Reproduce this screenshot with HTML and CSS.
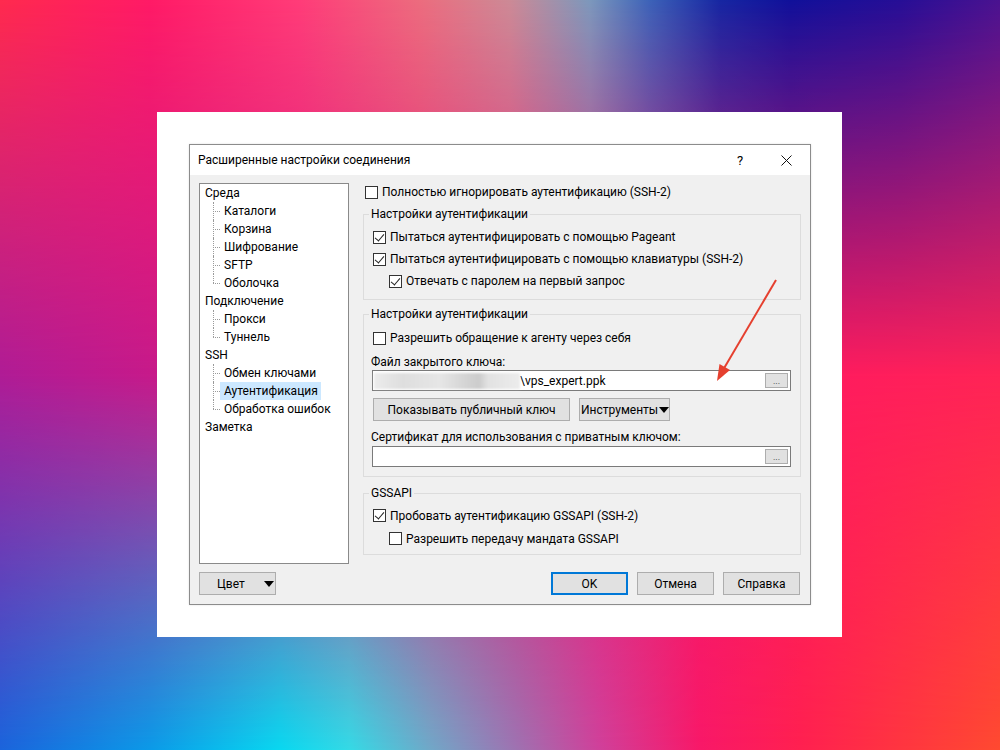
FILE: index.html
```html
<!DOCTYPE html>
<html lang="ru">
<head>
    <meta charset="utf-8">
    <title>Расширенные настройки соединения</title>
    <link rel="stylesheet" href="styles.css">
</head>
<body>
    <div class="card">
        <div class="dialog">
            <div class="titlebar">
                <span class="title">Расширенные настройки соединения</span>
                <span class="tb-btn">?</span>
                <span class="tb-btn">
                    <svg width="11" height="11" viewBox="0 0 11 11"><path d="M0.5 0.5L10.5 10.5M10.5 0.5L0.5 10.5" stroke="#111" stroke-width="1"/></svg>
                </span>
            </div>

            <div class="content">
                <div class="main">
                    <ul class="tree">
                        <li class="node">Среда</li>
                        <li class="leaf"><span>Каталоги</span></li>
                        <li class="leaf"><span>Корзина</span></li>
                        <li class="leaf"><span>Шифрование</span></li>
                        <li class="leaf"><span>SFTP</span></li>
                        <li class="leaf last"><span>Оболочка</span></li>
                        <li class="node">Подключение</li>
                        <li class="leaf"><span>Прокси</span></li>
                        <li class="leaf last"><span>Туннель</span></li>
                        <li class="node">SSH</li>
                        <li class="leaf"><span>Обмен ключами</span></li>
                        <li class="leaf"><span class="selected">Аутентификация</span></li>
                        <li class="leaf last"><span>Обработка ошибок</span></li>
                        <li class="node">Заметка</li>
                    </ul>

                    <div class="panel">
                        <div class="row top-row"><span class="cb"></span>Полностью игнорировать аутентификацию (SSH-2)</div>

                        <fieldset class="group g1">
                            <legend>Настройки аутентификации</legend>
                            <div class="row"><span class="cb on"></span>Пытаться аутентифицировать с помощью Pageant</div>
                            <div class="row"><span class="cb on"></span>Пытаться аутентифицировать с помощью клавиатуры (SSH-2)</div>
                            <div class="row indent"><span class="cb on"></span>Отвечать с паролем на первый запрос</div>
                        </fieldset>

                        <fieldset class="group g2">
                            <legend>Настройки аутентификации</legend>
                            <div class="row"><span class="cb"></span>Разрешить обращение к агенту через себя</div>
                            <div class="field-label">Файл закрытого ключа:</div>
                            <div class="input">
                                <span class="blurred"></span>
                                <span class="value">\vps_expert.ppk</span>
                                <span class="browse">...</span>
                            </div>
                            <div class="key-buttons">
                                <button class="btn pub">Показывать публичный ключ</button>
                                <button class="btn tools">Инструменты<span class="caret"></span></button>
                            </div>
                            <div class="field-label cert">Сертификат для использования с приватным ключом:</div>
                            <div class="input">
                                <span class="browse">...</span>
                            </div>
                        </fieldset>

                        <fieldset class="group g3">
                            <legend>GSSAPI</legend>
                            <div class="row"><span class="cb on"></span>Пробовать аутентификацию GSSAPI (SSH-2)</div>
                            <div class="row indent"><span class="cb"></span>Разрешить передачу мандата GSSAPI</div>
                        </fieldset>
                    </div>
                </div>

                <div class="footer">
                    <button class="btn color">Цвет<span class="caret"></span></button>
                    <div class="actions">
                        <button class="btn default">OK</button>
                        <button class="btn">Отмена</button>
                        <button class="btn">Справка</button>
                    </div>
                </div>
            </div>

            <!-- red pointer to the key file field -->
            <svg class="pointer" width="620" height="459" viewBox="0 0 620 459">
                <line x1="586" y1="135" x2="533" y2="225" stroke="#e5402f" stroke-width="2"/>
                <polygon points="527,236 529.5,219 540,225" fill="#e5402f"/>
            </svg>
        </div>
    </div>
</body>
</html>
```

FILE: styles.css
```css
body {
    margin: 0;
    width: 1000px;
    height: 750px;
    padding: 112px 0 0 157px;
    box-sizing: border-box;
    position: relative;
    overflow: hidden;
    font-family: Roboto, "Noto Sans", sans-serif;
    font-size: 12px;
    color: #000;
    background: linear-gradient(90deg, #b01c96 0, #c81a8a 160px, #ff1c5e 840px, #ff2456 1000px);
}
body::before,
body::after {
    content: '';
    position: absolute;
    top: 0;
    left: 0;
    right: 0;
    bottom: 0;
}
body::before {
    background: linear-gradient(90deg, #ff2a4e 0, #ff1a66 150px, #ff3c78 300px, #ec6c7e 420px, #cc8a96 510px, #7c98bc 590px, #3c62b8 650px, #1626a2 720px, #10109a 790px, #260e96 900px, #4a1290 1000px);
    -webkit-mask-image: linear-gradient(180deg, #000 0, transparent 50%);
    mask-image: linear-gradient(180deg, #000 0, transparent 50%);
}
body::after {
    background: linear-gradient(90deg, #1a64dc 0, #0a9ae8 150px, #08d8f0 280px, #34dae6 350px, #70a8c8 430px, #a070b0 520px, #d0409a 600px, #f81868 700px, #ff2050 800px, #ff4a30 1000px);
    -webkit-mask-image: linear-gradient(180deg, transparent 50%, #000 100%);
    mask-image: linear-gradient(180deg, transparent 50%, #000 100%);
}
.card {
    position: relative;
    z-index: 1;
    width: 622px;
    background-color: #fff;
    padding: 32px 31px 32px 32px;
}
.dialog {
    position: relative;
    width: 620px;
    height: 459px;
    display: flex;
    flex-direction: column;
    border: 1px solid #8c8c8c;
    background-color: #f0f0f0;
    box-shadow: 0 0 2px rgba(0, 0, 0, 0.12);
}
.titlebar {
    height: 30px;
    display: flex;
    align-items: center;
    background-color: #fff;
}
.title {
    flex: 1;
    padding-left: 8px;
}
.tb-btn {
    width: 46px;
    height: 30px;
    display: flex;
    align-items: center;
    justify-content: center;
    font-size: 13px;
}
.tb-btn:last-child {
    margin-right: 1px;
}
.content {
    flex: 1;
    display: flex;
    flex-direction: column;
    padding: 8px 9px 9px 9px;
}
.main {
    height: 381px;
    display: flex;
    gap: 14px;
}

/* tree */
.tree {
    width: 150px;
    box-sizing: border-box;
    margin: 0;
    padding: 0;
    list-style: none;
    border: 1px solid #8a8a8a;
    background-color: #fff;
}
.tree li {
    height: 18px;
    line-height: 18px;
    white-space: nowrap;
}
.node {
    padding-left: 5px;
}
.leaf {
    position: relative;
    padding-left: 20px;
}
.leaf span {
    display: inline-block;
    padding: 0 3px 0 4px;
}
.leaf .selected {
    background-color: #cce8ff;
}
.leaf::before {
    content: '';
    position: absolute;
    left: 13px;
    top: 9px;
    width: 7px;
    border-top: 1px dotted #9a9a9a;
}
.leaf::after {
    content: '';
    position: absolute;
    left: 13px;
    top: 0;
    bottom: 0;
    border-left: 1px dotted #9a9a9a;
}
.leaf.last::after {
    bottom: 9px;
}

/* right side */
.panel {
    flex: 1;
    display: flex;
    flex-direction: column;
}
.row {
    height: 22px;
    display: flex;
    align-items: center;
    gap: 4px;
    white-space: nowrap;
}
.top-row {
    height: 18px;
    padding-left: 2px;
}
.row.indent {
    padding-left: 16px;
}
.cb {
    position: relative;
    flex: none;
    width: 13px;
    height: 13px;
    box-sizing: border-box;
    border: 1px solid #333;
    background-color: #fff;
}
.cb.on::after {
    content: '';
    position: absolute;
    left: 3px;
    top: 0;
    width: 4px;
    height: 8px;
    border: solid #222;
    border-width: 0 1px 1px 0;
    transform: rotate(40deg);
}
.group {
    margin: 0;
    border: 1px solid #dcdcdc;
    padding: 4px 9px 7px;
    min-width: 0;
}
.group legend {
    height: 16px;
    line-height: 16px;
    padding: 0 2px;
    margin-left: -4px;
}
.g1 {
    margin-top: 5px;
}
.g2 {
    margin-top: 6px;
    padding-top: 5px;
    padding-bottom: 9px;
}
.g3 {
    margin-top: 8px;
    padding-top: 3px;
    padding-bottom: 4px;
}
.g3 .row {
    height: 23px;
}
.field-label {
    height: 16px;
    line-height: 16px;
    margin: 5px 0 0 -2px;
}
.field-label.cert {
    margin-top: 8px;
}
.input {
    height: 21px;
    box-sizing: border-box;
    margin: 0 0 0 -1px;
    display: flex;
    align-items: center;
    border: 1px solid #7a7a7a;
    background-color: #fff;
    padding: 0 2px 0 1px;
}
.field-label.cert + .input {
    margin-top: 1px;
}
.blurred {
    width: 146px;
    height: 16px;
    background: linear-gradient(90deg, #ececec 0, #dedede 20%, #e6e6e6 45%, #d2d2d2 65%, #cccccc 72%, #e2e2e2 78%, #ececec 100%);
    filter: blur(1px);
}
.browse {
    margin-left: auto;
    width: 23px;
    height: 15px;
    box-sizing: border-box;
    border: 1px solid #adadad;
    background-color: #e1e1e1;
    font-size: 9px;
    line-height: 15px;
    text-align: center;
    color: #333;
}
.key-buttons {
    display: flex;
    gap: 9px;
    margin-top: 7px;
}
.btn {
    height: 23px;
    box-sizing: border-box;
    border: 1px solid #adadad;
    background-color: #e1e1e1;
    font-family: inherit;
    font-size: 12px;
    color: #000;
    padding: 0;
}
.btn.pub {
    width: 197px;
}
.btn.tools {
    width: 91px;
    display: flex;
    align-items: center;
    padding-left: 1px;
}
.caret {
    display: inline-block;
    width: 0;
    height: 0;
    border-left: 5px solid transparent;
    border-right: 5px solid transparent;
    border-top: 6px solid #000;
    margin-left: 1px;
}

/* bottom buttons */
.footer {
    margin-top: 8px;
    display: flex;
    align-items: center;
}
.btn.color {
    width: 77px;
    display: flex;
    align-items: center;
    padding-left: 17px;
}
.btn.color .caret {
    margin-left: 19px;
}
.actions {
    margin-left: auto;
    margin-right: 1px;
    display: flex;
    gap: 9px;
}
.actions .btn {
    width: 77px;
}
.btn.default {
    border-color: #0078d7;
    box-shadow: inset 0 0 0 1px #0078d7;
}
.pointer {
    position: absolute;
    left: 0;
    top: 0;
    pointer-events: none;
}
```
